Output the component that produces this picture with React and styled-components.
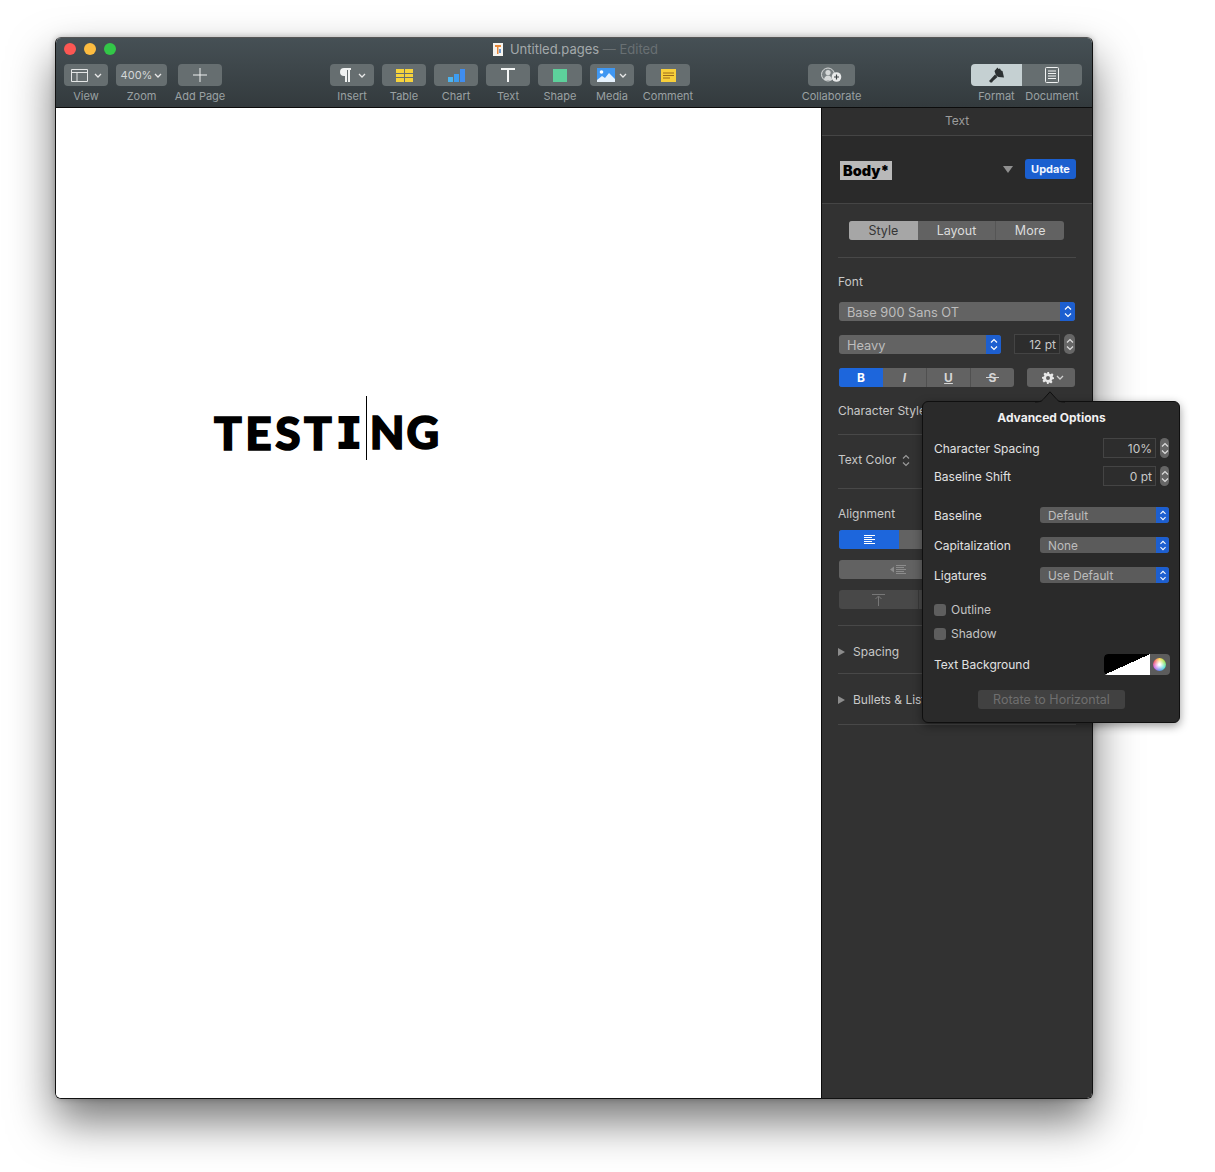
import React from "react";
import styled, { createGlobalStyle } from "styled-components";

const GlobalStyle = createGlobalStyle`
  html, body {
    margin: 0;
    padding: 0;
    background: #fff;
  }
  body {
    font-family: Inter, "Liberation Sans", sans-serif;
    font-size: 12px;
  }
`;

const Chevron = ({ color = "#e8e8e8" }) => (
  <svg width="8" height="5" viewBox="0 0 8 5" fill="none">
    <path d="M1 1l3 3 3-3" stroke={color} strokeWidth="1.3" />
  </svg>
);

const UpDown = ({ color = "#fff", h = 13 }) => (
  <svg width="8" height={h} viewBox="0 0 8 13" fill="none">
    <path d="M1 4.5L4 1.5l3 3M1 8.5l3 3 3-3" stroke={color} strokeWidth="1.2" />
  </svg>
);

const ViewIcon = () => (
  <svg width="17" height="13" viewBox="0 0 17 13" fill="none" stroke="#e4e6e6">
    <path d="M.5.5h16v12H.5zM.5 3.5h16M6 3.5v9" />
  </svg>
);

const PilcrowIcon = () => (
  <svg width="12" height="14" viewBox="0 0 12 14" fill="#f0f2f2">
    <path d="M5 0h7v2h-1v12H9V2H8v12H6V8H5A4 4 0 0 1 5 0z" />
  </svg>
);

const PlusIcon = () => (
  <svg width="14" height="14" viewBox="0 0 14 14" stroke="#eef0f0">
    <path d="M7 0v14M0 7h14" />
  </svg>
);

const TableIcon = () => (
  <svg width="17" height="13" viewBox="0 0 17 13" fill="#f6d33c">
    <path d="M0 0h8v4H0zM9 0h8v4H9zM0 5h8v3H0zM9 5h8v3H9zM0 9h8v4H0zM9 9h8v4H9z" />
  </svg>
);

const ChartIcon = () => (
  <svg width="17" height="13" viewBox="0 0 17 13">
    <path d="M0 8h5v5H0z" fill="#4cb4ef" />
    <path d="M6 5h5v8H6z" fill="#3d9cf0" />
    <path d="M12 0h5v13h-5z" fill="#3f8df0" />
  </svg>
);

const TextIcon = () => (
  <svg width="14" height="14" viewBox="0 0 14 14" fill="#f4f6f6">
    <path d="M0 0h14v2H8v12H6V2H0z" />
  </svg>
);

const MediaIcon = () => (
  <svg width="18" height="14" viewBox="0 0 18 14">
    <path d="M0 0h18v14H0z" fill="#3f97f2" />
    <circle cx="4.5" cy="4" r="1.8" fill="#fff" />
    <path d="M0 12l5-4 3 2 4-5 6 6v3H0z" fill="#e6f2fd" />
  </svg>
);

const CommentIcon = () => (
  <svg width="15" height="13" viewBox="0 0 15 13">
    <path d="M0 0h15v13H0z" fill="#f8cf3a" />
    <path d="M2 4h11M2 6.500h11M2 9h7" stroke="#9a6a1c" />
  </svg>
);

const CollabIcon = () => (
  <svg width="23" height="16" viewBox="0 0 23 16">
    <circle cx="8" cy="7.500" r="6.500" fill="#7a8183" stroke="#d5d8d8" />
    <circle cx="8" cy="5.500" r="2.600" fill="#d5d8d8" />
    <path d="M4 13c0-3 2-4.500 4-4.500s4 1.500 4 4.500z" fill="#d5d8d8" />
    <circle cx="16.500" cy="10" r="4.800" fill="#e8eaea" />
    <path d="M14 10h5M16.500 7.500v5" stroke="#3c4345" strokeWidth="1.200" />
  </svg>
);

const BrushIcon = () => (
  <svg width="17" height="16" viewBox="0 0 17 16" fill="#2c3133">
    <path d="M6.500 4L9.500.5l1 1.500 1.500-.5 1 2 1.500.5 1.500 6.500-5.500-.5L8 8.500z" />
    <path d="M7 7.500l2.500 2.500-4.500 4-1 1.500H2.500L1 14l1-1z" />
  </svg>
);

const DocIcon = () => (
  <svg width="14" height="16" viewBox="0 0 14 16" fill="none" stroke="#f0f2f2">
    <rect x=".5" y=".5" width="13" height="15" rx="1" />
    <path d="M3 4h8M3 6.500h8M3 9h8M3 11.500h8" />
  </svg>
);

const GearIcon = () => (
  <svg width="12" height="12" viewBox="0 0 24 24" fill="#e8e8e8">
    <path
      fillRule="evenodd"
      d="M10 0h4l.8 3.400 2.400 1 3-1.800 2.800 2.800-1.800 3 1 2.400L24 10v4l-3.800.8-1 2.400 1.800 3-2.800 2.800-3-1.800-2.400 1L14 24h-4l-.8-3.800-2.400-1-3 1.800-2.800-2.800 1.800-3-1-2.400L0 14v-4l3.800-.8 1-2.400-1.800-3 2.800-2.800 3 1.800 2.400-1zM12 8a4 4 0 1 0 0 8 4 4 0 0 0 0-8z"
    />
  </svg>
);

const AlignLeftIcon = () => (
  <svg width="11" height="9" viewBox="0 0 11 9" stroke="#fff">
    <path d="M0 .5h11M0 2.500h8M0 4.500h11M0 6.500h8M0 8.500h11" />
  </svg>
);

const IndentIcon = () => (
  <svg width="16" height="9" viewBox="0 0 16 9">
    <path d="M0 4.500L4 1.500v6z" fill="#8c8c8c" />
    <path d="M6 .5h10M6 2.500h8M6 4.500h10M6 6.500h8M6 8.500h10" stroke="#8c8c8c" />
  </svg>
);

const TopAlignIcon = () => (
  <svg width="13" height="12" viewBox="0 0 13 12" fill="none" stroke="#777">
    <path d="M0 .5h13M6.500 12V2.500M3.500 5l3-3 3 3" />
  </svg>
);

const DocThumb = () => (
  <svg width="10" height="13" viewBox="0 0 10 13">
    <path d="M0 0h10v13H0z" fill="#f5f3ee" />
    <path d="M2 2h6v2H5.500v7H4V4H2z" fill="#e8883a" />
    <path d="M6 6h2v4H6z" fill="#6b9ad0" />
  </svg>
);

const Page = styled.div`
  padding: 37px 0 73px 55px;
`;

const Window = styled.div`
  position: relative;
  box-sizing: border-box;
  width: 1038px;
  height: 1062px;
  display: flex;
  flex-direction: column;
  border: 1px solid #111;
  border-top-color: #555;
  border-radius: 6px;
  box-shadow: 0 22px 45px rgba(0, 0, 0, 0.55), 0 0 6px rgba(0, 0, 0, 0.25);
`;

const TopBar = styled.div`
  height: 69px;
  flex: none;
  border-radius: 5px 5px 0 0;
  border-bottom: 1px solid #0c0c0c;
  background: linear-gradient(#465055, #333a3d);
`;

const TitleRow = styled.div`
  position: relative;
  height: 26px;
  display: flex;
  align-items: center;
  justify-content: center;
  gap: 7px;
  padding: 0 0 4px 3px;
  box-sizing: border-box;
  font-size: 13px;
  color: #a3a9ab;
`;

const Lights = styled.div`
  position: absolute;
  left: 8px;
  top: 5px;
  display: flex;
  gap: 8px;
`;

const Light = styled.span`
  width: 12px;
  height: 12px;
  border-radius: 50%;
  background: ${(p) => p.$color};
`;

const Edited = styled.span`
  color: #697073;
`;

const Tools = styled.div`
  display: flex;
  padding-left: 8px;
  align-items: flex-start;
`;

const ToolGroup = styled.div`
  display: flex;
  gap: ${(p) => p.$gap || 8}px;
  margin-left: ${(p) => p.$left || 0}px;
`;

const Tool = styled.div`
  width: ${(p) => p.$width || 44}px;
  margin-left: ${(p) => p.$left || 0}px;
  display: flex;
  flex-direction: column;
  align-items: center;
`;

const ToolButton = styled.div`
  box-sizing: border-box;
  width: 100%;
  height: 22px;
  display: flex;
  align-items: center;
  justify-content: center;
  gap: ${(p) => p.$gap || 0}px;
  border-radius: 4px;
  font-size: 11px;
  color: #d4d7d8;
  background: ${(p) => (p.$active ? "#c5d0d2" : "#666e70")};
`;

const ToolLabel = styled.div`
  margin-top: 3px;
  font-size: 11px;
  line-height: 14px;
  color: #9aa1a3;
  white-space: nowrap;
`;

const ShapeSquare = styled.span`
  width: 14px;
  height: 13px;
  background: #5dd09b;
`;

const ToolPair = styled.div`
  display: flex;
  width: 111px;
  margin-left: 116px;
`;

const PairButton = styled(ToolButton)`
  border-radius: ${(p) => p.$radius};
`;

const Main = styled.div`
  flex: 1;
  display: flex;
  min-height: 0;
`;

const Canvas = styled.div`
  width: 765px;
  flex: none;
  box-sizing: border-box;
  padding: 288px 0 0 158px;
  background: #fff;
  border-radius: 0 0 0 5px;
`;

const Heading = styled.div`
  display: flex;
  align-items: center;
  height: 72px;
  font-family: Lato, Inter, sans-serif;
  font-size: 46px;
  font-weight: 900;
  letter-spacing: 3.5px;
  color: #000;
  -webkit-text-stroke: 1.5px #000;
  white-space: nowrap;
`;

const SerifI = styled.span`
  font-family: Inter, sans-serif;
  font-feature-settings: "cv08";
  letter-spacing: 0;
  margin-left: 2px;
  -webkit-text-stroke: 0;
`;

const TailLetters = styled.span`
  font-size: 45px;
  letter-spacing: 2px;
`;

const Caret = styled.span`
  align-self: flex-start;
  width: 1px;
  height: 64px;
  margin: 0 3px 0 5px;
  background: #000;
`;

const Inspector = styled.div`
  position: relative;
  flex: 1;
  border-left: 1px solid #0c0c0c;
  background: #323232;
  border-radius: 0 0 5px 0;
  font-size: 12px;
  color: #c8c8c8;
`;

const InspectorTitle = styled.div`
  box-sizing: border-box;
  height: 28px;
  padding-bottom: 2px;
  display: flex;
  align-items: center;
  justify-content: center;
  background: #2f2f2f;
  border-bottom: 1px solid #454545;
  color: #9c9c9c;
`;

const StyleRow = styled.div`
  height: 67px;
  display: flex;
  align-items: center;
  padding: 0 16px 0 18px;
  background: #2a2a2a;
  border-bottom: 1px solid #454545;
`;

const StyleChip = styled.span`
  padding: 0 3px;
  height: 19px;
  line-height: 19px;
  margin-top: 2px;
  font-size: 14.500px;
  font-weight: 900;
  color: #000;
  background: #b9b9b9;
`;

const StyleArrow = styled.span`
  margin-left: auto;
  margin-right: 12px;
  border-left: 5.500px solid transparent;
  border-right: 5.500px solid transparent;
  border-top: 7px solid #8f8f8f;
`;

const UpdateButton = styled.span`
  width: 51px;
  height: 20px;
  margin-top: -1px;
  display: flex;
  align-items: center;
  justify-content: center;
  border-radius: 3px;
  background: #1b5fcf;
  color: #f2f6ff;
  font-size: 11px;
  font-weight: 700;
`;

const Section = styled.div`
  margin: 0 16px;
  padding-top: ${(p) => p.$top || 0}px;
  padding-bottom: ${(p) => p.$bottom || 0}px;
  border-bottom: 1px solid #484848;
`;

const Tabs = styled.div`
  display: flex;
  width: 215px;
  height: 19px;
  margin-left: 11px;
  border-radius: 3px;
  overflow: hidden;
  background: #626262;
  font-size: 12.500px;
`;

const Tab = styled.div`
  width: ${(p) => p.$width}px;
  display: flex;
  align-items: center;
  justify-content: center;
  background: ${(p) => (p.$active ? "#a6a6a6" : "transparent")};
  color: ${(p) => (p.$active ? "#363636" : "#dcdcdc")};
  border-left: ${(p) => (p.$line ? "1px solid #555" : "none")};
`;

const Label = styled.div`
  line-height: 16px;
  margin-top: ${(p) => p.$top || 0}px;
  display: flex;
  align-items: center;
  gap: ${(p) => p.$gap || 0}px;
  color: #c8c8c8;
  white-space: nowrap;
`;

const ControlRow = styled.div`
  display: flex;
  align-items: center;
  justify-content: space-between;
  margin: ${(p) => p.$top || 0}px 1px 0;
`;

const Select = styled.div`
  box-sizing: border-box;
  width: ${(p) => p.$width}px;
  height: ${(p) => p.$height || 19}px;
  padding-left: 8px;
  display: flex;
  align-items: center;
  justify-content: space-between;
  border-radius: 3px;
  overflow: hidden;
  background: ${(p) => (p.$small ? "#5b5b5b" : "#636363")};
  color: #bdbdbd;
  font-size: ${(p) => (p.$small ? 11.8 : 12.8)}px;
  margin-top: ${(p) => p.$top || 0}px;
  margin-left: ${(p) => p.$left || 0}px;
`;

const SelectText = styled.span`
  padding-top: 2px;
`;

const SelectArrows = styled.span`
  width: ${(p) => p.$width || 15}px;
  align-self: stretch;
  display: flex;
  align-items: center;
  justify-content: center;
  background: #1d5fd0;
`;

const NumberBox = styled.div`
  display: flex;
  align-items: center;
  justify-content: flex-end;
  box-sizing: border-box;
  width: ${(p) => p.$width}px;
  height: 20px;
  padding-right: 3px;
  border: 1px solid #444;
  background: #2d2d2d;
  color: #c8c8c8;
  font-size: 12px;
`;

const Stepper = styled.div`
  width: ${(p) => p.$width || 11}px;
  height: 20px;
  margin-left: 4px;
  display: flex;
  align-items: center;
  justify-content: center;
  border-radius: 5px;
  background: #666;
`;

const FieldGroup = styled.div`
  display: flex;
  align-items: center;
`;

const Segmented = styled.div`
  display: flex;
  width: ${(p) => p.$width}px;
  height: 19px;
  border-radius: 3px;
  overflow: hidden;
  background: ${(p) => (p.$dim ? "#484848" : "#626262")};
  margin: ${(p) => p.$top || 0}px ${(p) => (p.$flush ? 0 : 1)}px 0;
`;

const Segment = styled.div`
  width: ${(p) => p.$width}px;
  display: flex;
  align-items: center;
  justify-content: center;
  flex: none;
  border-right: ${(p) => (p.$line ? `1px solid ${p.$line}` : "none")};
  background: ${(p) => (p.$active ? "#1d66dc" : "transparent")};
  color: ${(p) => (p.$active ? "#fff" : "#d6d6d6")};
  font-size: 12px;
  font-weight: 700;
  box-sizing: border-box;
`;

const SegmentText = styled.span`
  font-style: ${(p) => (p.$italic ? "italic" : "normal")};
  text-decoration: ${(p) => p.$deco || "none"};
`;

const StruckText = styled.span`
  position: relative;
  &::after {
    content: "";
    position: absolute;
    left: -3px;
    right: -3px;
    top: 7px;
    height: 1px;
    background: #d6d6d6;
  }
`;

const GearButton = styled.div`
  box-sizing: border-box;
  width: 48px;
  height: 19px;
  padding-left: 3px;
  display: flex;
  align-items: center;
  justify-content: center;
  gap: 2px;
  border-radius: 3px;
  background: #626262;
`;

const Disclosure = styled.span`
  margin-right: 8px;
  border-top: 4px solid transparent;
  border-bottom: 4px solid transparent;
  border-left: 7px solid #8c8c8c;
`;

const Popover = styled.div`
  position: absolute;
  left: 100px;
  top: 293px;
  box-sizing: border-box;
  width: 258px;
  height: 322px;
  padding: 8px 10px 0 11px;
  border: 1px solid #0f0f0f;
  border-radius: 6px;
  background: #2a2a2a;
  box-shadow: 0 3px 10px rgba(0, 0, 0, 0.4);
  color: #e2e2e2;
`;

const PopoverArrow = styled.svg`
  position: absolute;
  left: 112px;
  top: -11px;
`;

const PopoverTitle = styled.div`
  line-height: 16px;
  text-align: center;
  font-weight: 700;
  color: #f0f0f0;
`;

const PopRow = styled.div`
  display: flex;
  align-items: center;
  justify-content: space-between;
  margin-top: ${(p) => p.$top}px;
  min-height: 16px;
`;

const CheckRow = styled.div`
  display: flex;
  align-items: center;
  gap: 5px;
  line-height: 16px;
  margin-top: ${(p) => p.$top}px;
  color: #c4c4c4;
`;

const CheckBox = styled.span`
  width: 12px;
  height: 12px;
  border-radius: 3px;
  background: #5e5e5e;
`;

const Swatch = styled.div`
  display: flex;
  width: 66px;
  height: 21px;
  margin-right: -1px;
  border-radius: 4px;
  overflow: hidden;
  background: #5c5c5c;
`;

const SwatchFill = styled.span`
  width: 46px;
  background: linear-gradient(to bottom right, #000 50%, #fff 50%);
`;

const SwatchWheel = styled.span`
  width: 13px;
  height: 13px;
  margin: 4px 0 0 3px;
  border-radius: 50%;
  background: radial-gradient(#fff 10%, rgba(255, 255, 255, 0) 70%),
    conic-gradient(#ffd54a, #8fe04a, #4ae0d0, #5a8cf0, #d060e0, #f05060, #ffd54a);
`;

const RotateButton = styled.div`
  width: 147px;
  height: 19px;
  margin: 15px 0 0 44px;
  display: flex;
  align-items: center;
  justify-content: center;
  border-radius: 3px;
  background: #414141;
  color: #6f6f6f;
  font-size: 12.500px;
`;

export default function App() {
  return (
    <Page>
      <GlobalStyle />
      <Window>
        <TopBar>
          <TitleRow>
            <Lights>
              <Light $color="#fc5753" />
              <Light $color="#fdbc40" />
              <Light $color="#33c748" />
            </Lights>
            <DocThumb />
            <span>
              Untitled.pages <Edited>— Edited</Edited>
            </span>
          </TitleRow>
          <Tools>
            <Tool>
              <ToolButton $gap={6}>
                <ViewIcon />
                <Chevron />
              </ToolButton>
              <ToolLabel>View</ToolLabel>
            </Tool>
            <Tool $width={51} $left={8}>
              <ToolButton $gap={2}>
                400%
                <Chevron />
              </ToolButton>
              <ToolLabel>Zoom</ToolLabel>
            </Tool>
            <Tool $left={11}>
              <ToolButton>
                <PlusIcon />
              </ToolButton>
              <ToolLabel>Add Page</ToolLabel>
            </Tool>
            <ToolGroup $left={108}>
              <Tool>
                <ToolButton $gap={7}>
                  <PilcrowIcon />
                  <Chevron />
                </ToolButton>
                <ToolLabel>Insert</ToolLabel>
              </Tool>
              <Tool>
                <ToolButton>
                  <TableIcon />
                </ToolButton>
                <ToolLabel>Table</ToolLabel>
              </Tool>
              <Tool>
                <ToolButton>
                  <ChartIcon />
                </ToolButton>
                <ToolLabel>Chart</ToolLabel>
              </Tool>
              <Tool>
                <ToolButton>
                  <TextIcon />
                </ToolButton>
                <ToolLabel>Text</ToolLabel>
              </Tool>
              <Tool>
                <ToolButton>
                  <ShapeSquare />
                </ToolButton>
                <ToolLabel>Shape</ToolLabel>
              </Tool>
              <Tool>
                <ToolButton $gap={4}>
                  <MediaIcon />
                  <Chevron />
                </ToolButton>
                <ToolLabel>Media</ToolLabel>
              </Tool>
              <Tool $left={4}>
                <ToolButton>
                  <CommentIcon />
                </ToolButton>
                <ToolLabel>Comment</ToolLabel>
              </Tool>
            </ToolGroup>
            <Tool $width={47} $left={118}>
              <ToolButton>
                <CollabIcon />
              </ToolButton>
              <ToolLabel>Collaborate</ToolLabel>
            </Tool>
            <ToolPair>
              <Tool $width={51}>
                <PairButton $active $radius="4px 0 0 4px">
                  <BrushIcon />
                </PairButton>
                <ToolLabel>Format</ToolLabel>
              </Tool>
              <Tool $width={60}>
                <PairButton $radius="0 4px 4px 0">
                  <DocIcon />
                </PairButton>
                <ToolLabel>Document</ToolLabel>
              </Tool>
            </ToolPair>
          </Tools>
        </TopBar>
        <Main>
          <Canvas>
            <Heading>
              TEST
              <SerifI>I</SerifI>
              <Caret />
              <TailLetters>NG</TailLetters>
            </Heading>
          </Canvas>
          <Inspector>
            <InspectorTitle>Text</InspectorTitle>
            <StyleRow>
              <StyleChip>Body*</StyleChip>
              <StyleArrow />
              <UpdateButton>Update</UpdateButton>
            </StyleRow>
            <Section $top={17} $bottom={17}>
              <Tabs>
                <Tab $width={69} $active>
                  Style
                </Tab>
                <Tab $width={78}>Layout</Tab>
                <Tab $width={68} $line>
                  More
                </Tab>
              </Tabs>
            </Section>
            <Section $top={16} $bottom={15}>
              <Label>Font</Label>
              <Select $width={236} $top={12} $left={1}>
                <SelectText>Base 900 Sans OT</SelectText>
                <SelectArrows>
                  <UpDown />
                </SelectArrows>
              </Select>
              <ControlRow $top={13}>
                <Select $width={162}>
                  <SelectText>Heavy</SelectText>
                  <SelectArrows>
                    <UpDown />
                  </SelectArrows>
                </Select>
                <FieldGroup>
                  <NumberBox $width={46}>12 pt</NumberBox>
                  <Stepper>
                    <UpDown color="#ddd" />
                  </Stepper>
                </FieldGroup>
              </ControlRow>
              <ControlRow $top={14}>
                <Segmented $width={175} $flush>
                  <Segment $width={44} $active>
                    B
                  </Segment>
                  <Segment $width={44} $line="#505050">
                    <SegmentText $italic>I</SegmentText>
                  </Segment>
                  <Segment $width={44} $line="#505050">
                    <SegmentText $deco="underline">U</SegmentText>
                  </Segment>
                  <Segment $width={43}>
                    <StruckText>S</StruckText>
                  </Segment>
                </Segmented>
                <GearButton>
                  <GearIcon />
                  <Chevron color="#d0d0d0" />
                </GearButton>
              </ControlRow>
              <Label $top={16}>Character Styles</Label>
            </Section>
            <Section $top={17} $bottom={20}>
              <Label $gap={6}>
                Text Color
                <UpDown color="#9a9a9a" />
              </Label>
            </Section>
            <Section $top={17} $bottom={16}>
              <Label>Alignment</Label>
              <Segmented $width={236} $top={8}>
                <Segment $width={60} $active>
                  <AlignLeftIcon />
                </Segment>
              </Segmented>
              <Segmented $width={236} $top={11}>
                <Segment $width={118}>
                  <IndentIcon />
                </Segment>
              </Segmented>
              <Segmented $width={236} $top={11} $dim>
                <Segment $width={80} $line="#3a3a3a">
                  <TopAlignIcon />
                </Segment>
              </Segmented>
            </Section>
            <Section $top={18} $bottom={13}>
              <Label>
                <Disclosure />
                Spacing
              </Label>
            </Section>
            <Section $top={18} $bottom={16}>
              <Label>
                <Disclosure />
                Bullets &amp; Lists
              </Label>
            </Section>
            <Popover>
              <PopoverArrow width="30" height="12" viewBox="0 0 30 12">
                <path d="M0 11.500c5 0 7-1 9-3.500l6-7 6 7c2 2.500 4 3.500 9 3.500z" fill="#2a2a2a" />
                <path d="M0 11c5 0 7-1 9-3.500L15 .8l6 6.700c2 2.500 4 3.500 9 3.500" fill="none" stroke="#0f0f0f" />
              </PopoverArrow>
              <PopoverTitle>Advanced Options</PopoverTitle>
              <PopRow $top={12}>
                Character Spacing
                <FieldGroup>
                  <NumberBox $width={53}>10%</NumberBox>
                  <Stepper $width={9}>
                    <UpDown color="#ddd" />
                  </Stepper>
                </FieldGroup>
              </PopRow>
              <PopRow $top={8}>
                Baseline Shift
                <FieldGroup>
                  <NumberBox $width={53}>0 pt</NumberBox>
                  <Stepper $width={9}>
                    <UpDown color="#ddd" />
                  </Stepper>
                </FieldGroup>
              </PopRow>
              <PopRow $top={21}>
                Baseline
                <Select $width={129} $height={16} $small>
                  <SelectText>Default</SelectText>
                  <SelectArrows $width={13}>
                    <UpDown h={11} />
                  </SelectArrows>
                </Select>
              </PopRow>
              <PopRow $top={14}>
                Capitalization
                <Select $width={129} $height={16} $small>
                  <SelectText>None</SelectText>
                  <SelectArrows $width={13}>
                    <UpDown h={11} />
                  </SelectArrows>
                </Select>
              </PopRow>
              <PopRow $top={14}>
                Ligatures
                <Select $width={129} $height={16} $small>
                  <SelectText>Use Default</SelectText>
                  <SelectArrows $width={13}>
                    <UpDown h={11} />
                  </SelectArrows>
                </Select>
              </PopRow>
              <CheckRow $top={19}>
                <CheckBox />
                Outline
              </CheckRow>
              <CheckRow $top={8}>
                <CheckBox />
                Shadow
              </CheckRow>
              <PopRow $top={12}>
                Text Background
                <Swatch>
                  <SwatchFill />
                  <SwatchWheel />
                </Swatch>
              </PopRow>
              <RotateButton>Rotate to Horizontal</RotateButton>
            </Popover>
          </Inspector>
        </Main>
      </Window>
    </Page>
  );
}
